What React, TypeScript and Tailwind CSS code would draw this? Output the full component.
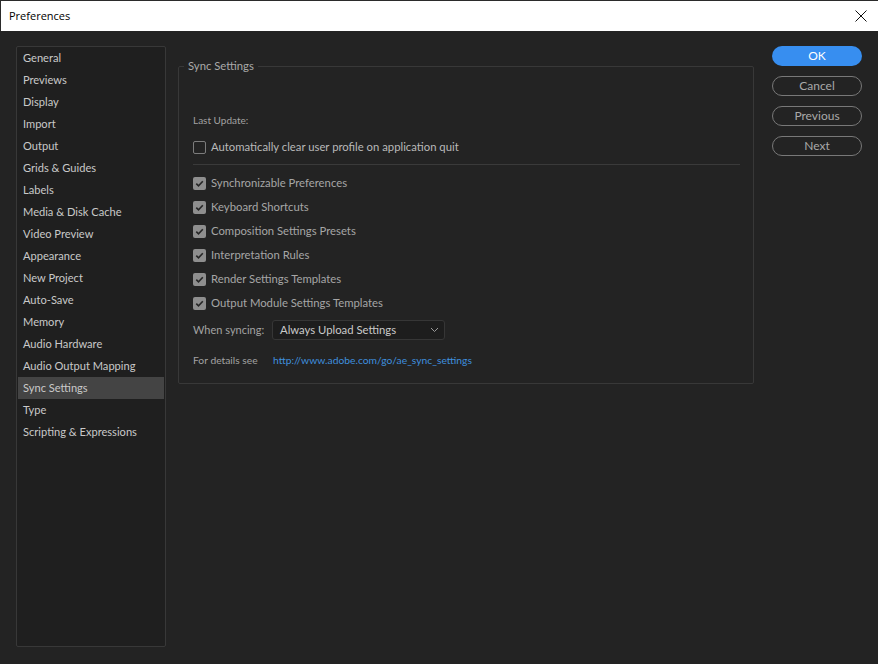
import React from 'react';

const NAV = [
  'General',
  'Previews',
  'Display',
  'Import',
  'Output',
  'Grids & Guides',
  'Labels',
  'Media & Disk Cache',
  'Video Preview',
  'Appearance',
  'New Project',
  'Auto-Save',
  'Memory',
  'Audio Hardware',
  'Audio Output Mapping',
  'Sync Settings',
  'Type',
  'Scripting & Expressions',
];

const SYNC_ITEMS = [
  'Synchronizable Preferences',
  'Keyboard Shortcuts',
  'Composition Settings Presets',
  'Interpretation Rules',
  'Render Settings Templates',
  'Output Module Settings Templates',
];

const Checkbox: React.FC<{ checked?: boolean }> = ({ checked }) =>
  checked ? (
    <span className="w-[13px] h-[13px] rounded-[2px] bg-[#8e8e8e] flex items-center justify-center shrink-0">
      <svg width="9" height="9" viewBox="0 0 9 9">
        <path d="M1.3 4.6 L3.5 6.8 L7.8 2.2" fill="none" stroke="#262626" strokeWidth="1.6" />
      </svg>
    </span>
  ) : (
    <span className="w-[13px] h-[13px] rounded-[2px] border-[1.5px] border-[#7c7c7c] shrink-0" />
  );

const App: React.FC = () => {
  return (
    <div
      className="w-[878px] h-[664px] flex flex-col bg-[#232323] overflow-hidden text-[11.3px]"
      style={{ fontFamily: '"Lato", "Noto Sans", sans-serif' }}
    >
      {/* Title bar */}
      <div className="h-[31px] bg-white border-t border-l border-[#2b2b2b] flex items-center justify-between pl-[8px] pr-[10px] shrink-0">
        <span className="text-[11px] text-black" style={{ fontFamily: '"Open Sans", sans-serif' }}>
          Preferences
        </span>
        <svg width="12" height="12" viewBox="0 0 12 12" className="mr-[1px]">
          <path d="M0.5 0.5 L11.5 11.5 M11.5 0.5 L0.5 11.5" stroke="#111" strokeWidth="1" />
        </svg>
      </div>

      {/* Body */}
      <div className="flex flex-1 pt-[15px] pl-[16px]">
        {/* Sidebar */}
        <div className="w-[150px] h-[601px] bg-[#1f1f1f] border border-[#383838] rounded-[2px] px-[1px] pb-[1px] flex flex-col shrink-0">
          {NAV.map((item) => (
            <div
              key={item}
              className={`h-[22px] flex items-center pl-[5px] text-[11.1px] text-[#c9c9c9] ${
                item === 'Sync Settings' ? 'bg-[#444444]' : ''
              }`}
            >
              {item}
            </div>
          ))}
        </div>

        {/* Group box */}
        <fieldset className="ml-[12px] mt-[12px] w-[576px] h-[326px] border border-[#383838] rounded-[2px] pl-[14px] pr-[13px] self-start">
          <legend className="ml-[-9px] px-[4px] text-[#a9a9a9] leading-[16px]">Sync Settings</legend>
          <div className="pt-[38px] flex flex-col">
            <div className="h-[16px] flex items-center text-[#a2a2a2] text-[10px]">Last Update:</div>
            <div className="h-[24px] mt-[7px] flex items-center gap-[5px] text-[#b9b9b9]">
              <Checkbox />
              <span>Automatically clear user profile on application quit</span>
            </div>
            <div className="h-px bg-[#3a3a3a] mt-[5px] mb-[6px]" />
            {SYNC_ITEMS.map((item) => (
              <div key={item} className="h-[24px] flex items-center gap-[5px] text-[#a6a6a6]">
                <Checkbox checked />
                <span>{item}</span>
              </div>
            ))}
            <div className="flex items-center mt-[5px] text-[#a2a2a2]">
              <span className="w-[79px] text-[11px]">When syncing:</span>
              <div className="w-[173px] h-[20px] bg-[#1d1d1d] border border-[#363636] rounded-[3px] flex items-center justify-between pl-[7px] pr-[5px] text-[#cacaca]">
                <span>Always Upload Settings</span>
                <svg width="9" height="6" viewBox="0 0 9 6">
                  <path d="M1 1 L4.5 4.5 L8 1" fill="none" stroke="#9a9a9a" strokeWidth="1" />
                </svg>
              </div>
            </div>
            <div className="flex items-center mt-[13px] text-[10.3px]">
              <span className="w-[80px] text-[#a2a2a2]">For details see</span>
              <span className="text-[#3f8fdf]">http://www.adobe.com/go/ae_sync_settings</span>
            </div>
          </div>
        </fieldset>

        {/* Buttons */}
        <div className="ml-[18px] flex flex-col gap-[10px] w-[90px]">
          <button className="h-[20px] rounded-full bg-[#378ef0] text-white text-[12px] leading-none">OK</button>
          <button className="h-[20px] rounded-full border border-[#787878] text-[#a9a9a9] text-[12px] leading-none">
            Cancel
          </button>
          <button className="h-[20px] rounded-full border border-[#787878] text-[#a9a9a9] text-[12px] leading-none">
            Previous
          </button>
          <button className="h-[20px] rounded-full border border-[#787878] text-[#a9a9a9] text-[12px] leading-none">
            Next
          </button>
        </div>
      </div>
    </div>
  );
};

export default App;
